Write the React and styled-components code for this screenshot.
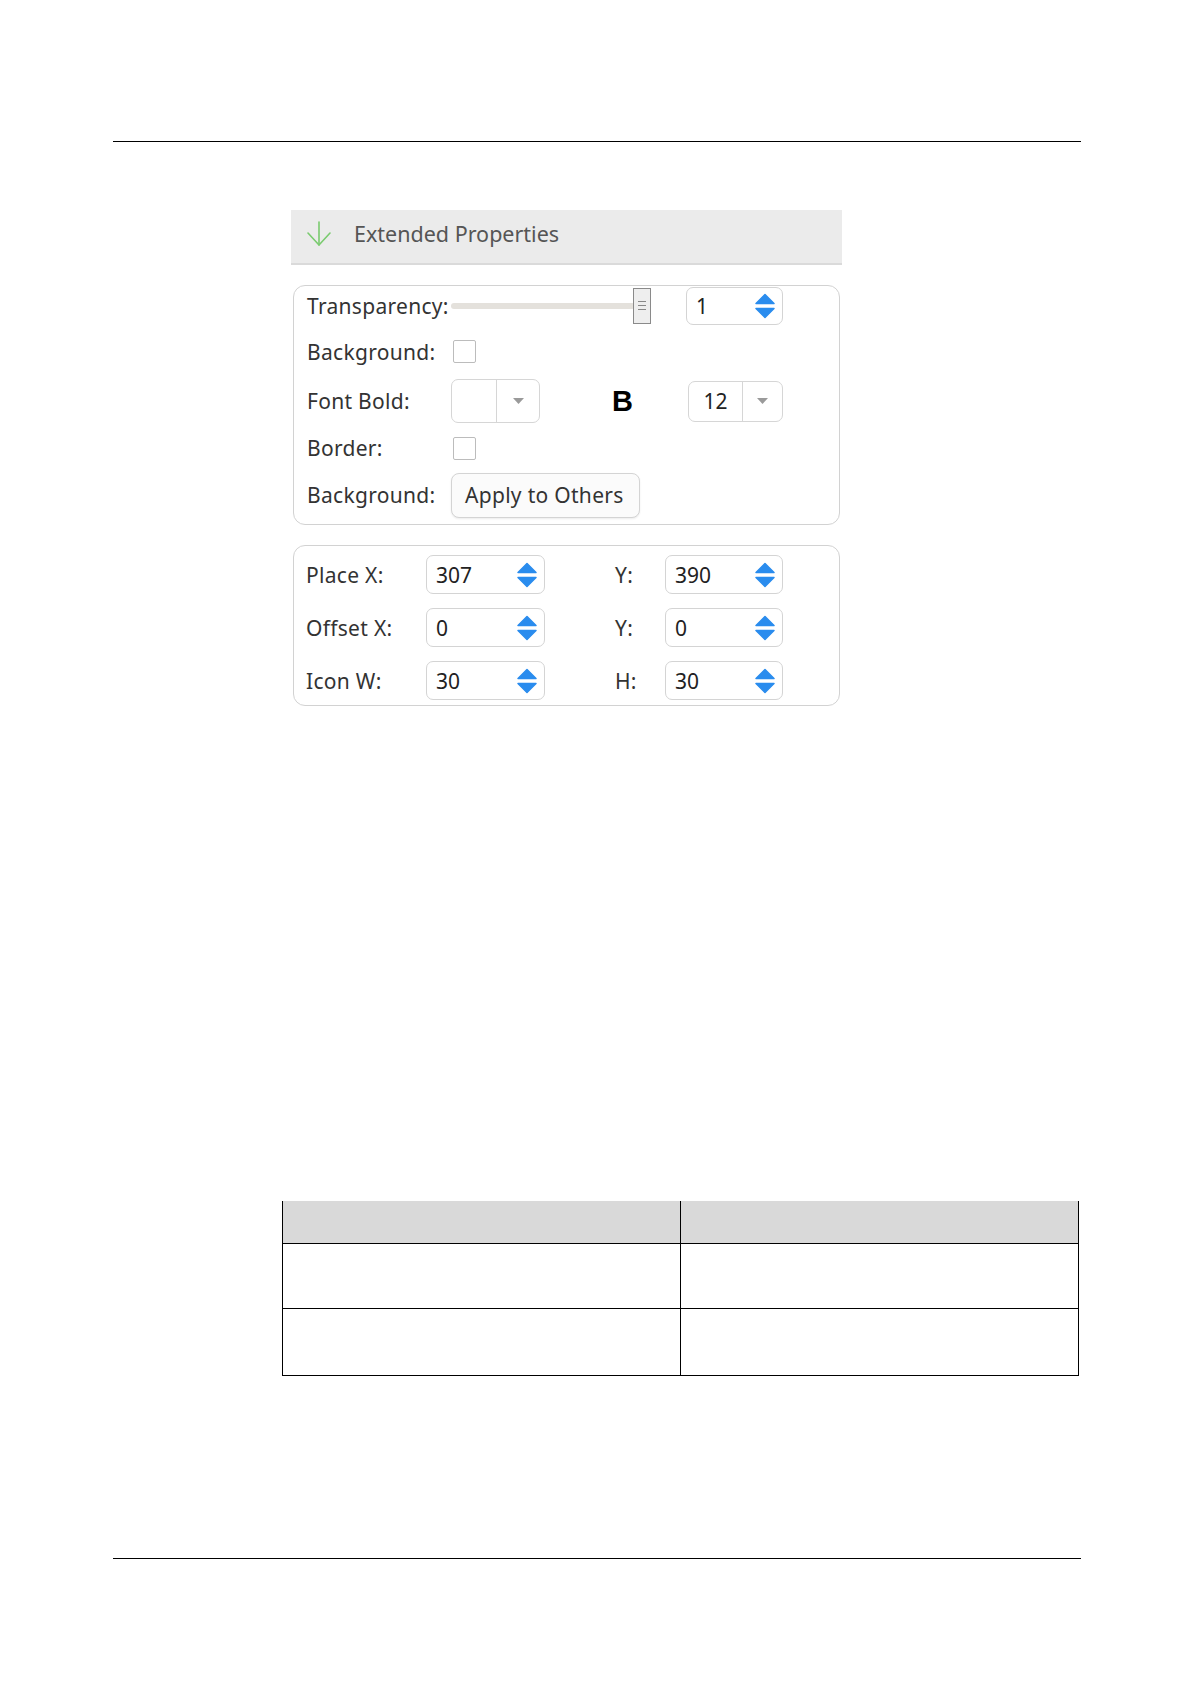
import React from "react";
import styled, { createGlobalStyle } from "styled-components";

const GlobalStyle = createGlobalStyle`
  body {
    margin: 0;
    background: #fff;
    font-family: "Noto Sans", "Liberation Sans", sans-serif;
  }
`;

const Page = styled.div`
  width: 1190px;
  height: 1684px;
  box-sizing: border-box;
  padding: 141px 109px 0 113px;
  display: flex;
  flex-direction: column;
`;

const Rule = styled.div`
  height: 0;
  border-top: 1.5px solid #000;
  margin-top: ${(p) => p.$top || 0}px;
`;

const Content = styled.div`
  margin-left: 178px;
  width: 551px;
  display: flex;
  flex-direction: column;
`;

const Header = styled.div`
  margin-top: 68px;
  height: 55px;
  background: #ebebeb;
  border-bottom: 2px solid #dadada;
  display: flex;
  align-items: center;
  padding: 0 0 6px 16px;
  box-sizing: border-box;
  gap: 21px;
`;

const HeaderTitle = styled.span`
  font-size: 21.5px;
  color: #555;
`;

const Panel = styled.div`
  margin: 20px 2px 0 2px;
  border: 1.5px solid #d2d2d2;
  border-radius: 12px;
  box-sizing: border-box;
  height: ${(p) => p.$height}px;
  padding: ${(p) => p.$pad};
  display: grid;
  grid-template-columns: ${(p) => p.$cols};
  grid-template-rows: ${(p) => p.$rows};
  align-items: center;
`;

const Label = styled.span`
  font-size: 21px;
  letter-spacing: 0.3px;
  color: #333;
  white-space: nowrap;
`;

const Slider = styled.div`
  width: 200px;
  height: 36px;
  display: flex;
  align-items: center;
`;

const Track = styled.div`
  width: 184px;
  height: 6px;
  background: #e4e1dc;
  border-radius: 3px;
`;

const Thumb = styled.div`
  width: 16px;
  height: 34px;
  margin-left: -2px;
  border: 1px solid #8a8a8a;
  background: #eeeeee;
  display: flex;
  flex-direction: column;
  align-items: center;
  justify-content: center;
  gap: 3px;
`;

const Grip = styled.div`
  width: 8px;
  height: 1px;
  background: #888;
`;

const Spin = styled.div`
  width: ${(p) => p.$w}px;
  height: ${(p) => p.$h}px;
  box-sizing: border-box;
  border: 1px solid #d4d4d4;
  border-radius: 7px;
  background: #fff;
  display: flex;
  align-items: center;
  justify-content: space-between;
  padding: 0 6px 0 9px;
`;

const Value = styled.span`
  font-size: 21px;
  color: #222;
`;

const Combo = styled.div`
  width: ${(p) => p.$w}px;
  height: ${(p) => p.$h}px;
  margin-left: ${(p) => p.$left || 0}px;
  box-sizing: border-box;
  border: 1px solid #d6d6d6;
  border-radius: 7px;
  background: #fff;
  display: grid;
  grid-template-columns: ${(p) => p.$split}px 1fr;
  align-items: stretch;
`;

const ComboText = styled.div`
  display: flex;
  align-items: center;
  justify-content: center;
  font-size: 21px;
  color: #222;
  border-right: 1px solid #d6d6d6;
`;

const ComboArrow = styled.div`
  display: flex;
  align-items: center;
  justify-content: center;
`;

const Check = styled.div`
  width: 23px;
  height: 23px;
  box-sizing: border-box;
  border: 1px solid #bcbcbc;
  border-radius: 2px;
  background: #fff;
  margin-left: 2px;
`;

const Inline = styled.div`
  display: flex;
  align-items: center;
`;

const Bold = styled.span`
  margin-left: 72px;
  font-family: "Liberation Sans", Arial, sans-serif;
  font-weight: 700;
  font-size: 29px;
  color: #000;
`;

const Button = styled.div`
  width: 189px;
  height: 45px;
  box-sizing: border-box;
  border: 1px solid #d4d4d4;
  border-radius: 8px;
  background: #fbfbfb;
  box-shadow: 0 1px 2px rgba(0, 0, 0, 0.08);
  display: flex;
  align-items: center;
  padding-left: 13px;
  font-size: 21px;
  letter-spacing: 0.3px;
  color: #333;
  white-space: nowrap;
`;

const Table = styled.table`
  margin: 495px 0 0 169px;
  width: 797px;
  border-collapse: collapse;
  table-layout: fixed;
`;

const Th = styled.th`
  height: 42px;
  background: #d9d9d9;
  border-left: 1.5px solid #000;
  border-right: 1.5px solid #000;
  border-bottom: 1.5px solid #000;
  padding: 0;
`;

const Td = styled.td`
  height: ${(p) => p.$h}px;
  border: 1.5px solid #000;
  padding: 0;
`;

const DownArrow = () => (
  <svg width="26" height="28" viewBox="0 0 26 28">
    <g fill="none" stroke="#7acb6f" strokeWidth="1.6" strokeLinecap="round" strokeLinejoin="round">
      <line x1="12" y1="2" x2="12" y2="25" />
      <polyline points="1,13 12,25 23,13" />
    </g>
  </svg>
);

const SpinArrows = () => (
  <svg width="22" height="26" viewBox="0 0 22 26">
    <path d="M2 10.5 L11 1.5 L20 10.5 Z" fill="#2a8cee" stroke="#2a8cee" strokeWidth="1.5" strokeLinejoin="round" />
    <path d="M2 15.5 L20 15.5 L11 24.5 Z" fill="#2a8cee" stroke="#2a8cee" strokeWidth="1.5" strokeLinejoin="round" />
  </svg>
);

const Caret = () => (
  <svg width="11" height="7" viewBox="0 0 11 7">
    <path d="M0 0 L11 0 L5.5 6 Z" fill="#9a9a9a" />
  </svg>
);

function SpinBox({ value, w = 119, h = 39 }) {
  return (
    <Spin $w={w} $h={h}>
      <Value>{value}</Value>
      <SpinArrows />
    </Spin>
  );
}

export default function App() {
  const positions = [
    ["Place X:", "307", "Y:", "390"],
    ["Offset X:", "0", "Y:", "0"],
    ["Icon W:", "30", "H:", "30"],
  ];

  return (
    <>
      <GlobalStyle />
      <Page>
        <Rule />
        <Content>
          <Header>
            <DownArrow />
            <HeaderTitle>Extended Properties</HeaderTitle>
          </Header>

          <Panel
            $height={240}
            $pad="0 12px 0 13px"
            $cols="144px 235px 100px"
            $rows="39px 53px 46px 48px 46px"
          >
            <Label>Transparency:</Label>
            <Slider>
              <Track />
              <Thumb>
                <Grip />
                <Grip />
                <Grip />
              </Thumb>
            </Slider>
            <SpinBox value="1" w={97} h={38} />

            <Label>Background:</Label>
            <Check />
            <span />

            <Label>Font Bold:</Label>
            <Inline>
              <Combo $w={89} $h={44} $split={45}>
                <ComboText />
                <ComboArrow>
                  <Caret />
                </ComboArrow>
              </Combo>
              <Bold>B</Bold>
            </Inline>
            <Combo $w={95} $h={41} $split={54} $left={2}>
              <ComboText>12</ComboText>
              <ComboArrow>
                <Caret />
              </ComboArrow>
            </Combo>

            <Label>Border:</Label>
            <Check />
            <span />

            <Label>Background:</Label>
            <Button>Apply to Others</Button>
            <span />
          </Panel>

          <Panel
            $height={161}
            $pad="2px 12px 0 12px"
            $cols="120px 119px 70px 50px 118px"
            $rows="53px 53px 53px"
          >
            {positions.map(([l1, v1, l2, v2]) => (
              <React.Fragment key={l1}>
                <Label>{l1}</Label>
                <SpinBox value={v1} />
                <span />
                <Label>{l2}</Label>
                <SpinBox value={v2} w={118} />
              </React.Fragment>
            ))}
          </Panel>
        </Content>

        <Table>
          <thead>
            <tr>
              <Th />
              <Th />
            </tr>
          </thead>
          <tbody>
            <tr>
              <Td $h={64} />
              <Td $h={64} />
            </tr>
            <tr>
              <Td $h={66} />
              <Td $h={66} />
            </tr>
          </tbody>
        </Table>

        <Rule $top={182} />
      </Page>
    </>
  );
}
